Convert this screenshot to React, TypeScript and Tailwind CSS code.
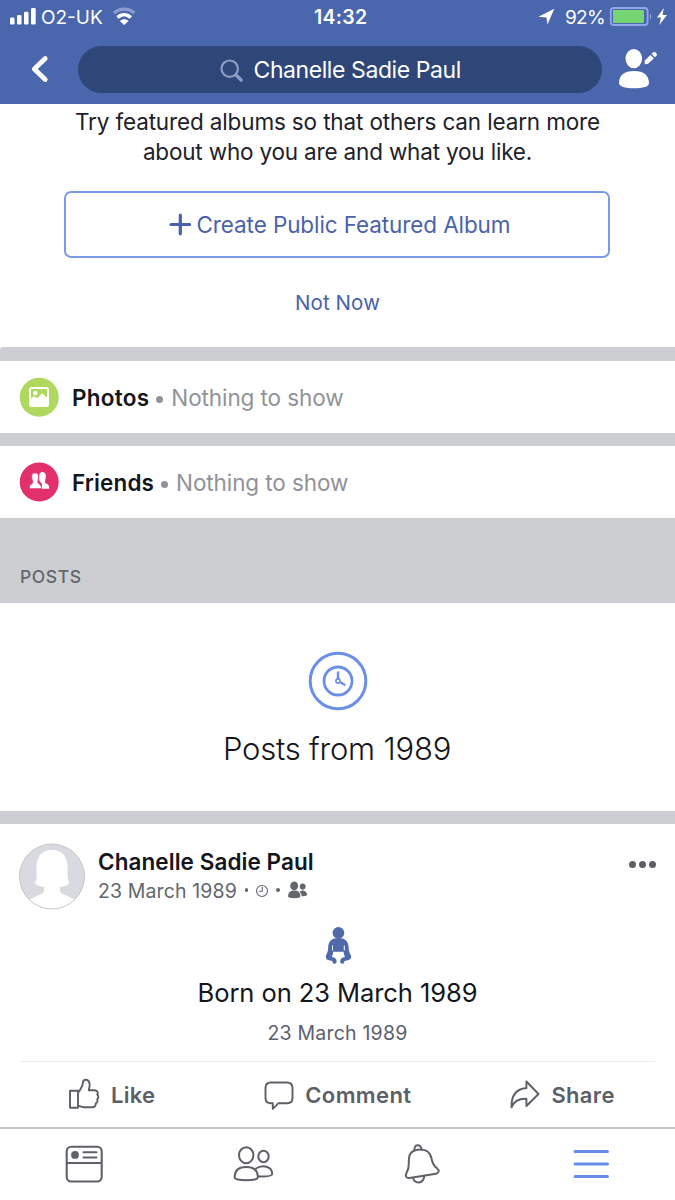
import type { ReactNode } from "react";

type IconProps = { x: number; y: number; w: number; h: number; className?: string; children: ReactNode };

function Icon({ x, y, w, h, className = "", children }: IconProps) {
  return (
    <svg
      width={w}
      height={h}
      viewBox={`${x} ${y} ${w} ${h}`}
      className={`block shrink-0 ${className}`}
      fill="none"
      stroke="currentColor"
      strokeLinecap="round"
      strokeLinejoin="round"
      aria-hidden="true"
    >
      {children}
    </svg>
  );
}

function StatusBar() {
  return (
    <div className="flex h-[35px] items-center whitespace-nowrap text-[19px]">
      <div className="flex w-[314px] items-center pl-[10px]">
        <Icon x={10} y={0} w={26} h={35}>
          <g fill="currentColor" stroke="none">
            <rect x="10" y="17.5" width="4.5" height="7" rx="1.2" />
            <rect x="17" y="15" width="4.5" height="9.5" rx="1.2" />
            <rect x="24" y="11.7" width="4.5" height="12.8" rx="1.2" />
            <rect x="31" y="8" width="4.7" height="16.5" rx="1.2" />
          </g>
        </Icon>
        <span className="mt-px ml-[5px]">O2-UK</span>
        <Icon x={112} y={0} w={24} h={35} className="ml-[9px]">
          <path d="M114 13C120 7.800 128.500 7.800 134.300 13" strokeWidth="3.400" strokeLinecap="butt" stroke="#8b9dce" />
          <path d="M117.500 17.500C121.500 13.700 126.800 13.700 130.800 17.500" strokeWidth="3.500" strokeLinecap="butt" />
          <path d="M119.800 20.900C122.500 18.600 126 18.600 128.600 20.900L124.200 25Z" fill="currentColor" stroke="none" />
        </Icon>
      </div>
      <span className="text-[19.5px] font-semibold tracking-[0.29px]">14:32</span>
      <div className="ml-auto flex items-center pr-[7px]">
        <Icon x={538} y={0} w={17} h={35}>
          <path d="M538.500 16.800L554.300 8.800L547.500 24.500L546.500 17.500Z" fill="currentColor" stroke="none" />
        </Icon>
        <span className="mt-px ml-[10px] tracking-[-0.68px]">92%</span>
        <Icon x={609} y={0} w={59} h={35} className="ml-[4px]">
          <rect x="610.800" y="8" width="36.800" height="17" rx="3" stroke="#92a8e6" strokeWidth="1.800" />
          <rect x="613" y="10" width="31" height="13" rx="1" fill="#74d572" stroke="none" />
          <path d="M650 13.500Q652.600 16.500 650 19.500Z" fill="#92a8e6" stroke="none" />
          <path d="M663.800 8L657 17.500H661L659.300 25L667 15H662.600Z" fill="currentColor" stroke="none" />
        </Icon>
      </div>
    </div>
  );
}

function Header() {
  return (
    <header className="h-[104px] bg-[#4a66ad] text-white">
      <StatusBar />
      <div className="flex h-[69px] items-center">
        <Icon x={30} y={54} w={20} h={30} className="ml-[30px]">
          <path d="M45.200 57.500L34.300 68L45.200 78.500" strokeWidth="4.800" />
        </Icon>
        <div className="ml-[28px] flex h-[47px] w-[524px] items-center rounded-full bg-[#2f4678] pl-[142px] text-[23px] whitespace-nowrap">
          <Icon x={220} y={57} w={24} h={26} className="text-[#8d9cc5]">
            <circle cx="229.700" cy="68.700" r="8.200" strokeWidth="2.200" />
            <path d="M236 75.100L241.200 80" strokeWidth="3.400" />
          </Icon>
          <span className="mt-px ml-[9.5px] tracking-[-0.42px]">Chanelle Sadie Paul</span>
        </div>
        <Icon x={618} y={49} w={41} h={42} className="ml-[16px]">
          <g fill="currentColor" stroke="none">
            <ellipse cx="633.800" cy="58.600" rx="8.300" ry="9.600" />
            <path d="M619 82.500C619.500 75 624 71 634 71C644 71 648.500 75 649 83C649 87 643 88.200 634 88.200C625 88.200 619 87 619 82.500Z" />
            <path d="M645 60.300L650.500 54.900L653.900 58.300L648.400 63.500Q645.500 64.800 644.700 64Q644.300 62.500 645 60.300Z" />
            <path d="M651.500 53.800L653 52.300Q654.500 51.300 656 52.700Q657.600 54.200 656.600 55.600L654.900 57.200Z" />
          </g>
        </Icon>
      </div>
    </header>
  );
}

function FeaturedAlbums() {
  return (
    <section className="flex h-[243px] flex-col items-center pt-[3px] text-[22.5px] whitespace-nowrap text-[#1d2129]">
      <p className="text-center leading-[29.5px]">
        <span className="block tracking-[-0.14px]">Try featured albums so that others can learn more</span>
        <span className="block tracking-[-0.18px]">about who you are and what you like.</span>
      </p>
      <button className="mt-[25px] mr-px flex h-[67px] w-[546px] items-center rounded-[7px] border-2 border-[#7b9bea] pl-[103px] text-[#4a62ab]">
        <Icon x={169} y={213} w={22} h={24}>
          <path d="M171 224.500H189.500M180.300 215.200V233.800" strokeWidth="3.200" />
        </Icon>
        <span className="ml-[5.5px] tracking-[-0.1px]">Create Public Featured Album</span>
      </button>
      <button className="mt-[31px] text-[20.5px] leading-[28px] tracking-[0.1px] text-[#4a62ab]">Not Now</button>
    </section>
  );
}

function SummaryRow({ icon, title }: { icon: ReactNode; title: ReactNode }) {
  return (
    <div className="flex h-[72px] items-center bg-white pl-[19px] text-[22.5px] whitespace-nowrap">
      {icon}
      <h2 className="mt-px ml-[13px] font-semibold text-[#14161c]">{title}</h2>
      <span className="mt-[4px] ml-[7px] size-[7px] rounded-full bg-[#919398]" />
      <span className="mt-px ml-[8px] tracking-[-0.09px] text-[#909298]">Nothing to show</span>
    </div>
  );
}

function Actions() {
  return (
    <div className="mx-[20px] flex h-[66px] items-center border-t border-[#ebecee] pt-px text-[22px] font-semibold text-[#5c5f66]">
      <button className="ml-[48px] flex items-center">
        <Icon x={68} y={1078} w={33} h={34}>
          <path d="M70 1090.700H78V1107.800H70Z" strokeWidth="1.900" />
          <path d="M78.800 1091.800C81 1088 82.900 1086.500 83 1082.500C83.100 1079 88.500 1078.300 89.600 1083.500C90 1086 89 1088 88.900 1090.200H94.500C97.800 1090.500 98.500 1093 97.200 1094.500C99 1096 98.600 1098.500 97.200 1099.300C98 1101 97.300 1102.800 95.800 1103.300C96 1106 94.500 1107.200 92 1107.200H84C81.500 1107.200 80.500 1106.500 78.800 1105.800" strokeWidth="1.900" />
        </Icon>
        <span className="ml-[10px] tracking-[0.26px]">Like</span>
      </button>
      <button className="ml-[108px] flex items-center">
        <Icon x={263} y={1078} w={32} h={34}>
          <path d="M271 1082.500H287Q292.500 1082.500 292.500 1088V1098Q292.500 1103.300 287 1103.300H278.300L272.800 1108.800V1103.300H271Q265.500 1103.300 265.500 1098V1088Q265.500 1082.500 271 1082.500Z" strokeWidth="1.900" />
        </Icon>
        <span className="ml-[10px] tracking-[0.38px]">Comment</span>
      </button>
      <button className="ml-[98px] flex items-center">
        <Icon x={509} y={1078} w={32} h={34}>
          <path d="M538.500 1094L526.400 1081.500V1088C516 1089 511.200 1096 511.500 1107.300C514 1101 519 1098.500 526.400 1098.800V1106Z" strokeWidth="1.900" />
        </Icon>
        <span className="ml-[10px] tracking-[0.33px]">Share</span>
      </button>
    </div>
  );
}

function Post() {
  return (
    <article className="flex h-[303px] flex-col">
      <div className="flex pt-[19px] pl-[19px]">
        <Icon x={19} y={843} w={66} h={67}>
          <circle cx="52" cy="876.500" r="32.500" fill="#d9dadf" stroke="none" />
          <path
            d="M52 850C61.500 849.500 67 856 67.500 866C68 873 66.500 878 69.500 883C68 885.500 64 886.500 60 887C59 892 61 893.500 66 895.500C70.500 897.500 73 898.500 75 899.500C68 907 60 909 52 909C44 909 36 907 29 899.500C31 898.500 33.500 897.500 38 895.500C43 893.500 45 892 44 887C40 886.500 36.500 885.500 35 883C38 878 36.200 873 36.500 866C37 856 42.500 850 52 850Z"
            fill="white"
            stroke="none"
          />
          <circle cx="52" cy="876.500" r="32.500" stroke="#c6c8cc" strokeWidth="1" />
        </Icon>
        <div className="pt-[3.5px] pl-[13px] leading-[29px] whitespace-nowrap">
          <h3 className="text-[22.5px] font-semibold tracking-[0.07px] text-[#14161c]">Chanelle Sadie Paul</h3>
          <div className="flex items-center text-[19.5px] text-[#63666d]">
            <span className="mt-px leading-[28px] tracking-[0.12px]">23 March 1989</span>
            <span className="ml-[8px] size-[3.5px] rounded-full bg-[#63666d]" />
            <Icon x={255} y={880} w={14} h={20} className="ml-[7px]">
              <circle cx="262" cy="891" r="5.500" strokeWidth="1.100" />
              <path d="M262.300 887.300V891.300H259.300" strokeWidth="1.100" />
            </Icon>
            <span className="ml-[7px] size-[3.5px] rounded-full bg-[#63666d]" />
            <Icon x={287} y={880} w={21} h={20} className="ml-[7.5px]">
              <g fill="currentColor" stroke="none">
                <ellipse cx="294.200" cy="885.900" rx="4" ry="4.300" />
                <ellipse cx="302.700" cy="886.600" rx="2.900" ry="3.100" />
                <path d="M288 896Q288.500 890.600 294.200 890.600Q300 890.600 300.500 896Q300.500 898.200 294.200 898.200Q288 898.200 288 896Z" />
                <path d="M299.500 891.700Q303 889.400 305.800 891.700Q307.200 893.300 307 895Q306 896.500 301.700 896.200Q301.700 893.500 299.500 891.700Z" />
              </g>
            </Icon>
          </div>
        </div>
        <div className="mt-[18px] mr-[19px] ml-auto flex h-[7px] gap-[3px]">
          <span className="size-[7px] rounded-full bg-[#5c5f66]" />
          <span className="size-[7px] rounded-full bg-[#5c5f66]" />
          <span className="size-[7px] rounded-full bg-[#5c5f66]" />
        </div>
      </div>
      <div className="mt-[16px] flex h-[135px] flex-col items-center">
        <Icon x={325} y={926} w={27} h={39} className="ml-[2px] text-[#4f69ab]">
          <g fill="currentColor" stroke="none">
            <circle cx="338.400" cy="932.800" r="5.900" />
            <path d="M338.400 938C345 938 348 941 348.500 946C348.800 950 349 952 350.200 954C352.500 958 350.500 960 347 960.500L344.300 961V962.300Q344 964 342 963.700Q340 963.300 340.200 961.500C340.300 958.500 342 957.500 345 957C344.200 955 343.600 953.500 343.600 951.800H333.200C333.200 953.500 332.600 955 331.800 957C334.800 957.500 336.500 958.500 336.600 961.500Q336.800 963.300 334.800 963.700Q332.800 964 332.500 962.300V961L329.800 960.500C326.300 960 324.800 958 326.600 954C328 951.500 328 950 328.300 946C328.800 941 331.800 938 338.400 938Z" />
          </g>
          <path d="M332.500 946V950M344.300 946V950" stroke="white" strokeWidth="1" />
        </Icon>
        <p className="mt-[10px] text-[25.5px] leading-[36px] tracking-[-0.07px] text-[#14161c]">Born on 23 March 1989</p>
        <p className="mt-[8px] text-[19.5px] leading-[28px] tracking-[0.2px] text-[#5c6070]">23 March 1989</p>
      </div>
      <Actions />
    </article>
  );
}

function TabBar() {
  return (
    <nav className="flex h-[73px] border-t-2 border-[#c3c5c9] bg-white text-[#5f6168]">
      <button className="flex flex-1 justify-center">
        <Icon x={63} y={1129} w={42} h={71}>
          <rect x="66.700" y="1146.700" width="35" height="34.800" rx="4.500" strokeWidth="2.100" />
          <path d="M67 1163H101.500M83.500 1152.300H96.500M83.500 1157.600H96.500" strokeWidth="2" />
          <circle cx="75" cy="1154.900" r="3.900" fill="currentColor" stroke="none" />
        </Icon>
      </button>
      <button className="flex flex-1 justify-center">
        <Icon x={232} y={1129} w={42} h={71}>
          <g strokeWidth="2">
            <ellipse cx="246.200" cy="1155.200" rx="7.200" ry="8" />
            <ellipse cx="263.500" cy="1156.500" rx="5.200" ry="5.700" />
            <path d="M234.700 1177C234.700 1170.500 239 1167 246.200 1167C253.500 1167 257.800 1170.500 257.800 1177C258 1179.300 253 1180.300 246.200 1180.300C239.500 1180.300 234.300 1179.300 234.700 1177Z" />
            <path d="M256 1168.500C262.500 1164 272.300 1166.500 272.200 1174C272 1176 267 1176.800 258.500 1176.500" />
          </g>
        </Icon>
      </button>
      <button className="flex flex-1 justify-center">
        <Icon x={401} y={1129} w={42} h={71}>
          <g strokeWidth="2">
            <path d="M408.800 1164C408.600 1156 409.500 1151.300 416.500 1150C424.500 1148.300 430 1151.500 431.500 1158.500C432.500 1164 434 1166 437 1168.200C439.800 1170.500 438.800 1173.200 436 1173.700L409.500 1178C405.800 1178.300 405.200 1175.500 406.500 1173C408.500 1169.500 408.900 1168 408.800 1164Z" />
            <path d="M414.500 1150.300C413.500 1144.200 420.500 1143.500 421.500 1149.500" />
            <path d="M413 1178C415 1184.500 423.500 1183.800 424.300 1176.200" />
          </g>
        </Icon>
      </button>
      <button className="flex flex-1 justify-center text-[#678be8]">
        <Icon x={570} y={1129} w={42} h={71}>
          <path d="M575 1151.500H607.500M575 1164H607.500M575 1176.500H607.500" strokeWidth="3" />
        </Icon>
      </button>
    </nav>
  );
}

export default function App() {
  return (
    <main className="h-[1200px] w-[675px] overflow-hidden bg-white font-['Inter','Liberation_Sans',sans-serif]">
      <Header />
      <FeaturedAlbums />
      <div className="h-[14px] rounded-tl-[3px] bg-[#cdced2]" />
      <SummaryRow
        icon={
          <Icon x={19} y={377} w={40} h={40}>
            <circle cx="39.200" cy="397.300" r="19.500" fill="#afd95e" stroke="none" />
            <path
              d="M31.500 387H46.500Q49 387 49 389.500V404.500Q49 407 46.500 407H31.500Q29 407 29 404.500V389.500Q29 387 31.500 387ZM31 389V398.500L34 396.200L37.500 398.200L42 393.200L47 397.500V389Z"
              fill="white"
              fillRule="evenodd"
              stroke="none"
            />
            <circle cx="35.300" cy="393" r="2.200" fill="white" stroke="none" />
          </Icon>
        }
        title={<span className="tracking-[0.25px]">Photos</span>}
      />
      <div className="h-[13px] bg-[#cdced2]" />
      <SummaryRow
        icon={
          <Icon x={19} y={462} w={40} h={40}>
            <circle cx="39.200" cy="482" r="19.500" fill="#e3306c" stroke="none" />
            <g fill="white" stroke="none">
              <path d="M42.500 472C46 472 46.300 476 45.500 479C44.800 481.500 44.500 483 47 484C49 485 49.200 486 49.200 488.700H42V484L39.500 481C39 478 38.500 472 42.500 472Z" />
              <path d="M35 472.800C39 472.800 39 476.500 38.300 479.300C37.700 481.600 37.500 483.300 39.500 484.200C41.300 485.200 41.500 486.500 41.500 488.700H29.300C29.300 486.500 29.300 485 31.300 484.200C33.500 483.300 32.700 481.600 32 479.300C31.300 476.500 31.300 472.800 35 472.800Z" stroke="#e3306c" strokeWidth="0.8" />
            </g>
          </Icon>
        }
        title={<span className="tracking-[0.12px]">Friends</span>}
      />
      <div className="flex h-[85px] items-end bg-[#cdced2] pb-[12px] pl-[20px]">
        <h2 className="text-[17.5px] leading-[28px] font-medium tracking-[0.6px] text-[#63666b]">POSTS</h2>
      </div>
      <section className="flex h-[208px] flex-col items-center pt-[48px]">
        <Icon x={307.5} y={651} w={60} h={60} className="text-[#6b8fe8]">
          <circle cx="337.500" cy="681" r="27.800" strokeWidth="3" />
          <circle cx="337.500" cy="681" r="14" strokeWidth="2.800" />
          <circle cx="337.500" cy="681" r="2.100" strokeWidth="1.600" />
          <path d="M337.500 678.500V672.500M339.800 682.300L344 684.700" strokeWidth="2.400" />
        </Icon>
        <h2 className="mt-[18px] mr-px text-[31px] leading-[40px] font-light tracking-[-0.2px] text-[#14161c]">Posts from 1989</h2>
      </section>
      <div className="h-[13px] bg-[#cdced2]" />
      <Post />
      <TabBar />
    </main>
  );
}
